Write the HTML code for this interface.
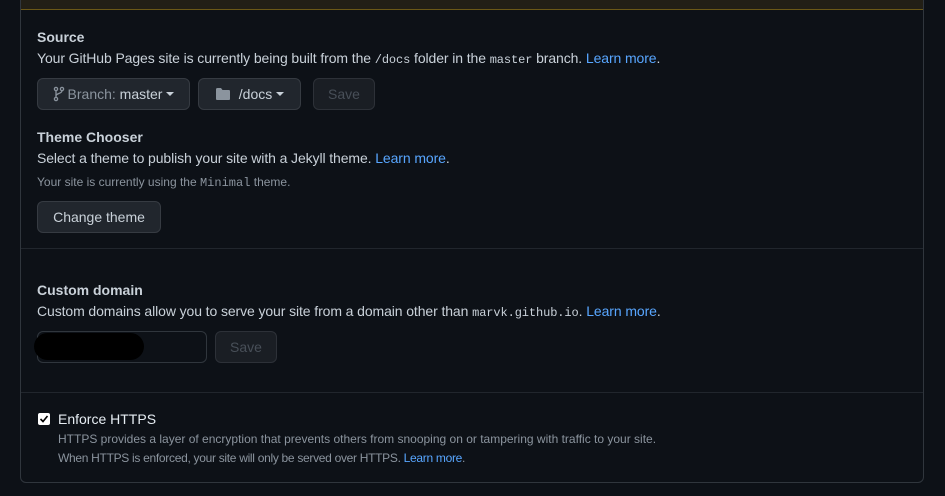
<html><head><style>
body{margin:0;width:945px;height:496px;background:#0d1117;font-family:"Liberation Sans",sans-serif;color:#c9d1d9;position:relative;overflow:hidden}
.a{position:absolute;white-space:nowrap}
.box{position:absolute;left:20px;top:-6px;width:902px;height:487px;border:1px solid #30363d;border-radius:6px;box-sizing:content-box}
.top{position:absolute;left:21px;top:0;width:902px;height:9px;background:#221f16;border-bottom:1px solid #6b5817}
.t{font-size:14px;font-weight:bold;color:#c9d1d9}
.d{font-size:14px;color:#c9d1d9;letter-spacing:-0.1px}
.s{font-size:12px;color:#8b949e}
a{color:#58a6ff;text-decoration:none}
code{font-family:"Liberation Mono",monospace;font-size:12px}
.btn{position:absolute;background:#21262d;border:1px solid #363b42;border-radius:6px;box-sizing:border-box;font-size:14px;color:#c9d1d9;display:flex;align-items:center;justify-content:center}
.dis{color:#484f58;background:#1a1e24;border-color:#2d3138}
.hr{position:absolute;left:21px;width:902px;height:1px;background:#21262d}
.car{display:inline-block;border-left:4px solid transparent;border-right:4px solid transparent;border-top:4px solid #c9d1d9;margin-left:4px;vertical-align:middle}
</style></head><body>
<div class="box"></div>
<div class="top"></div>
<div class="a t" style="left:37px;top:29px">Source</div>
<div class="a d" style="left:37px;top:50px">Your GitHub Pages site is currently being built from the <code>/docs</code> folder in the <code>master</code> branch. <a>Learn more</a>.</div>
<div class="btn" style="left:37px;top:78px;width:153px;height:32px"><svg width="12" height="16" viewBox="0 0 12 16" style="margin-right:3px"><circle cx="3" cy="3" r="1.6" fill="none" stroke="#8b949e" stroke-width="1.3"/><circle cx="3" cy="13" r="1.6" fill="none" stroke="#8b949e" stroke-width="1.3"/><circle cx="9" cy="3" r="1.6" fill="none" stroke="#8b949e" stroke-width="1.3"/><path d="M3 4.6V11.4M9 4.6C9 8 3 7 3 10" fill="none" stroke="#8b949e" stroke-width="1.3"/></svg><span style="color:#8b949e">Branch:</span>&nbsp;master<span class="car"></span></div>
<div class="btn" style="left:198px;top:78px;width:103px;height:32px"><svg width="16" height="14" viewBox="0 0 16 14" style="margin-right:8px"><path d="M1 2.5Q1 1 2.5 1H6L7.5 3H14Q15 3 15 4.5V12Q15 13 14 13H2Q1 13 1 12Z" fill="#8b949e"/></svg>/docs<span class="car"></span></div>
<div class="btn dis" style="left:313px;top:78px;width:62px;height:32px">Save</div>
<div class="a t" style="left:37px;top:129px">Theme Chooser</div>
<div class="a d" style="left:37px;top:150px">Select a theme to publish your site with a Jekyll theme. <a>Learn more</a>.</div>
<div class="a s" style="left:37px;top:175px">Your site is currently using the <code>Minimal</code> theme.</div>
<div class="btn" style="left:37px;top:201px;width:124px;height:32px">Change theme</div>
<div class="hr" style="top:248px"></div>
<div class="a t" style="left:37px;top:282px">Custom domain</div>
<div class="a d" style="left:37px;top:303px">Custom domains allow you to serve your site from a domain other than <code>marvk.github.io</code>. <a>Learn more</a>.</div>
<div class="a" style="left:37px;top:331px;width:170px;height:32px;border:1px solid #30363d;border-radius:6px;box-sizing:border-box;background:#0d1117"></div>
<div class="a" style="left:34px;top:333px;width:110px;height:27px;background:#000;border-radius:14px"></div>
<div class="btn dis" style="left:215px;top:331px;width:62px;height:32px">Save</div>
<div class="hr" style="top:392px"></div>
<div class="a" style="left:38px;top:413px;width:12px;height:12px;background:#fff;border-radius:2px"><svg width="12" height="12" viewBox="0 0 12 12"><path d="M2.5 6L5 8.5L9.5 3" fill="none" stroke="#000" stroke-width="1.6"/></svg></div>
<div class="a t" style="left:58px;top:411px;font-weight:normal;color:#e6edf3">Enforce HTTPS</div>
<div class="a s" style="left:58px;top:432px">HTTPS provides a layer of encryption that prevents others from snooping on or tampering with traffic to your site.</div>
<div class="a s" style="left:58px;top:451px;letter-spacing:-0.3px">When HTTPS is enforced, your site will only be served over HTTPS. <a>Learn more</a>.</div>
</body></html>
